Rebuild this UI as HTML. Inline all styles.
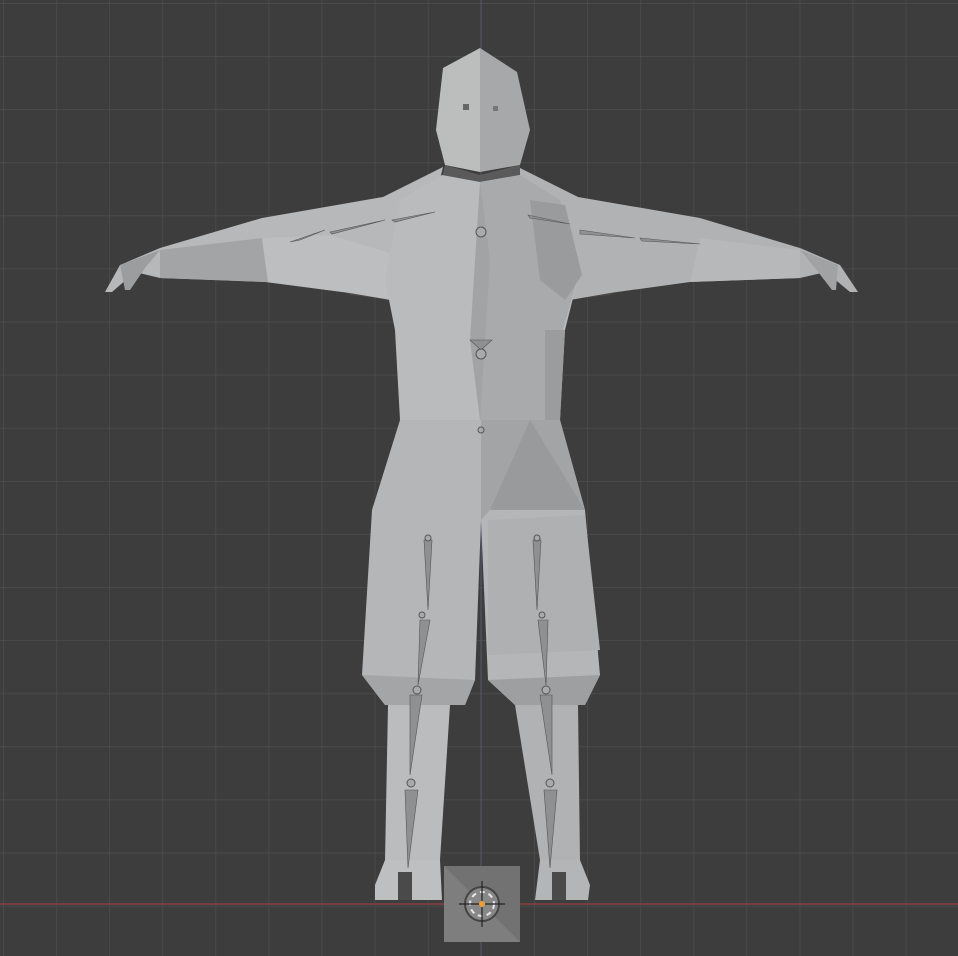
<!DOCTYPE html>
<html><head><meta charset="utf-8"><style>html,body{margin:0;padding:0;background:#3d3d3d;overflow:hidden}svg{display:block}</style></head><body>
<svg width="958" height="956" viewBox="0 0 958 956" xmlns="http://www.w3.org/2000/svg">
<defs>
<pattern id="g" x="3" y="3" width="53.1" height="53.1" patternUnits="userSpaceOnUse">
<path d="M0 0H53.1M0 0V53.1" stroke="#4d4d4d" stroke-width="1.5" fill="none"/>
</pattern>
</defs>
<rect width="958" height="956" fill="#3d3d3d"/>
<rect width="958" height="956" fill="url(#g)"/>
<line x1="481" y1="0" x2="481" y2="956" stroke="#556" stroke-width="1"/>
<line x1="0" y1="904" x2="958" y2="904" stroke="#8a3f41" stroke-width="1.5"/>
<polygon points="265,250 390,270 400,300 350,295" fill="#4f4b48"/>
<polygon points="695,250 570,270 560,300 610,295" fill="#4f4b48"/>
<polygon points="443,167 383,197 262,218 160,248 120,265 105,292 112,292 135,272 160,278 265,282 350,293 390,300 420,260" fill="#b6b8b9"/>
<polygon points="160,250 262,238 268,282 160,278" fill="#a3a4a5"/>
<polygon points="262,238 330,235 420,262 400,300 350,293 268,282" fill="#bcbebf"/>
<polygon points="120,265 160,250 145,268 130,290 125,290" fill="#9c9d9e"/>
<polygon points="518,167 578,197 700,218 800,248 840,265 858,292 850,292 826,272 800,278 690,282 610,293 570,300 540,260" fill="#b0b2b3"/>
<polygon points="800,250 700,238 690,282 800,278" fill="#b6b8b9"/>
<polygon points="838,265 800,250 815,268 832,290 836,290" fill="#a1a2a3"/>
<polygon points="443,68 480,48 480,172 445,165 436,130" fill="#bcbebe"/>
<polygon points="480,48 517,72 530,130 520,165 480,172" fill="#a7a8a9"/>
<polygon points="445,165 480,175 520,165 520,178 480,186 442,178" fill="#5a5a5a"/>
<polygon points="442,175 480,182 520,175 560,200 580,270 565,330 560,420 400,420 395,330 385,280 400,200" fill="#b9bbbc"/>
<polygon points="480,182 520,175 560,200 580,270 560,340 545,420 480,420" fill="#a9aaab"/>
<polygon points="480,182 490,260 480,420 470,340" fill="#a2a3a4"/>
<polygon points="530,200 565,205 582,275 565,300 540,280" fill="#9a9b9c"/>
<polygon points="545,330 565,330 560,420 545,420" fill="#9b9c9d"/>
<polygon points="400,420 560,420 585,510 600,675 585,705 515,705 488,680 481,520 475,680 465,705 385,705 362,675 372,510" fill="#b4b6b7"/>
<polygon points="481,420 560,420 585,510 490,510 481,520" fill="#a3a4a5"/>
<polygon points="530,420 585,510 490,510" fill="#999a9b"/>
<polygon points="488,520 585,515 600,650 488,655" fill="#aeb0b1"/>
<polygon points="362,675 475,680 465,705 385,705" fill="#a3a5a6"/>
<polygon points="488,680 600,675 585,705 515,705" fill="#9e9fa0"/>
<polygon points="388,705 450,705 440,860 385,860" fill="#babcbd"/>
<polygon points="515,705 578,705 580,860 540,860" fill="#b0b2b3"/>
<polygon points="385,860 440,860 442,900 375,900 375,885" fill="#bdbfc0"/>
<polygon points="540,860 580,860 590,885 588,900 535,900" fill="#b3b5b6"/>
<g fill="#8f9091" stroke="#555" stroke-width="0.6">
<polygon points="424,540 432,540 428,610"/><polygon points="420,620 430,620 418,685"/>
<polygon points="533,540 541,540 537,610"/><polygon points="538,620 548,620 546,685"/>
<polygon points="410,695 422,695 410,775"/><polygon points="405,790 418,790 408,868"/>
<polygon points="540,695 552,695 552,775"/><polygon points="544,790 557,790 550,868"/>
<polygon points="470,340 492,340 481,350"/>
<polygon points="300,240 325,230 290,242"/><polygon points="330,232 385,220 332,234"/><polygon points="392,220 435,212 395,222"/>
<polygon points="580,230 635,238 580,234"/><polygon points="640,238 700,244 642,241"/><polygon points="528,215 570,224 530,218"/>
</g>
<g fill="#aaa" stroke="#555" stroke-width="1">
<circle cx="481" cy="232" r="5"/><circle cx="481" cy="354" r="5"/><circle cx="481" cy="430" r="3"/>
<circle cx="428" cy="538" r="3"/><circle cx="537" cy="538" r="3"/><circle cx="422" cy="615" r="3"/><circle cx="542" cy="615" r="3"/>
<circle cx="417" cy="690" r="4"/><circle cx="546" cy="690" r="4"/><circle cx="411" cy="783" r="4"/><circle cx="550" cy="783" r="4"/>
</g>
<rect x="463" y="104" width="6" height="6" fill="#666"/><rect x="493" y="106" width="5" height="5" fill="#777"/>
<rect x="398" y="872" width="14" height="28" fill="#4a4a4a"/><rect x="552" y="872" width="14" height="28" fill="#4a4a4a"/>
<polygon points="444,866 520,866 520,942 444,942" fill="#7e7e7e"/>
<polygon points="444,866 520,866 520,942" fill="#727272"/>
<circle cx="482" cy="904" r="17" fill="#888" stroke="#444" stroke-width="2"/>
<circle cx="482" cy="904" r="12" fill="none" stroke="#e8e8e8" stroke-width="2" stroke-dasharray="5 4"/>
<line x1="459" y1="904" x2="505" y2="904" stroke="#222" stroke-width="1.2"/>
<line x1="482" y1="881" x2="482" y2="927" stroke="#222" stroke-width="1.2"/>
<circle cx="482" cy="904" r="3" fill="#f0a030"/>
</svg>
</body></html>
